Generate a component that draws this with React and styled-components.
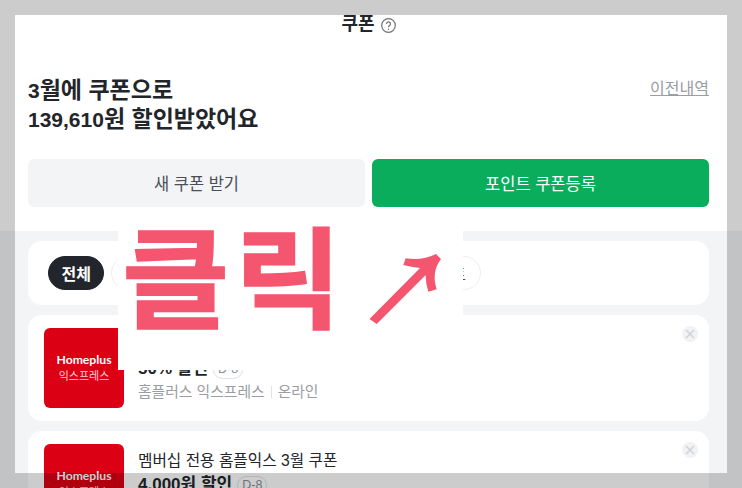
import styled, { createGlobalStyle } from "styled-components";

const GlobalStyle = createGlobalStyle`
  html, body {
    margin: 0;
    padding: 0;
    background: #fff;
  }
  * {
    box-sizing: border-box;
  }
`;

const Page = styled.div`
  position: relative;
  width: 742px;
  height: 488px;
  overflow: hidden;
  font-family: "Liberation Sans", "Noto Sans CJK KR", sans-serif;
  color: #22252a;
  background: #f3f4f6;
`;

const Top = styled.section`
  height: 231px;
  padding: 14px 33px 0 28px;
  background: #fff;
`;

const TitleBar = styled.div`
  display: flex;
  justify-content: center;
  align-items: center;
  gap: 6px;
  height: 20px;

  svg {
    margin-top: 3px;
  }
`;

const Title = styled.h1`
  margin: 0;
  font-size: 18px;
  line-height: 20px;
  font-weight: 700;
`;

const Summary = styled.div`
  display: flex;
  justify-content: space-between;
  align-items: flex-start;
  margin-top: 42px;
`;

const Headline = styled.h2`
  margin: 0;
  font-size: 23px;
  line-height: 29px;
  font-weight: 700;
`;

const Digits = styled.span`
  font-size: 21px;
`;

const HistoryLink = styled.a`
  font-size: 16px;
  line-height: 20px;
  margin-top: 3px;
  color: #9a9da3;
  text-decoration: underline;
`;

const ButtonRow = styled.div`
  display: grid;
  grid-template-columns: 1fr 1fr;
  gap: 7px;
  margin-top: 25px;
`;

const ActionButton = styled.button`
  height: 48px;
  border: none;
  border-radius: 6px;
  font-family: inherit;
  font-size: 16.5px;
  background: ${(p) => (p.$primary ? "#0aad5c" : "#f3f4f6")};
  color: ${(p) => (p.$primary ? "#fff" : "#4a4f57")};
`;

const ListArea = styled.section`
  display: flex;
  flex-direction: column;
  gap: 10px;
  padding: 10px 33px 0 28px;
`;

const FilterCard = styled.div`
  display: flex;
  align-items: center;
  gap: 6.7px;
  height: 64px;
  padding: 0 20px;
  border-radius: 14px;
  background: #fff;
`;

const Chip = styled.span`
  display: flex;
  justify-content: center;
  align-items: center;
  height: 34px;
  padding: 0 ${(p) => (p.$active ? "12.5px" : "14px")};
  border-radius: 17px;
  font-size: 16px;
  white-space: nowrap;
  font-weight: ${(p) => (p.$active ? 700 : 400)};
  color: ${(p) => (p.$active ? "#fff" : "#4a4f57")};
  background: ${(p) => (p.$active ? "#22262c" : "#fff")};
  border: 1px solid ${(p) => (p.$active ? "#22262c" : "#eceef0")};
`;

const CouponCard = styled.article`
  position: relative;
  display: flex;
  align-items: center;
  flex-shrink: 0;
  gap: 14px;
  height: 106px;
  padding: 0 16px;
  border-radius: 14px;
  background: #fff;
`;

const Thumb = styled.div`
  display: flex;
  flex-direction: column;
  justify-content: center;
  align-items: center;
  flex-shrink: 0;
  width: 80px;
  height: 80px;
  border-radius: 6px;
  color: #fff;
  background: #dc0014;
`;

const ThumbBrand = styled.span`
  font-family: Lato, "Liberation Sans", sans-serif;
  font-size: 12.2px;
  line-height: 16px;
  font-weight: 700;
`;

const ThumbSub = styled.span`
  font-size: 11px;
  line-height: 17px;
  color: rgba(255, 255, 255, 0.82);
`;

const CouponText = styled.div`
  display: flex;
  flex-direction: column;
`;

const CouponName = styled.div`
  margin-bottom: 3px;
  font-size: 15.7px;
  line-height: 21px;
`;

const AmountRow = styled.div`
  display: flex;
  align-items: center;
  gap: 5px;
  height: 22px;
`;

const Amount = styled.strong`
  font-size: 17px;
  line-height: 22px;
`;

const DayBadge = styled.span`
  padding: 0 4px;
  border: 1px solid #dfe1e4;
  border-radius: 10px;
  font-size: 12.5px;
  line-height: 17px;
  color: #8b8f96;
`;

const Meta = styled.div`
  display: flex;
  align-items: center;
  gap: 6px;
  margin-top: 2px;
  font-size: 14.8px;
  line-height: 20px;
  color: #9a9da3;
`;

const MetaDivider = styled.i`
  width: 1px;
  height: 12px;
  background: #dfe1e4;
`;

const CloseButton = styled.button`
  position: absolute;
  top: 11px;
  right: 11px;
  display: flex;
  justify-content: center;
  align-items: center;
  width: 16px;
  height: 16px;
  padding: 0;
  border: none;
  border-radius: 50%;
  background: #f1f2f4;
`;

const Annotation = styled.div`
  position: absolute;
  left: 118px;
  top: 220px;
  width: 345px;
  height: 150px;
  background: #fff;
`;

const ClickLabel = styled.span`
  position: absolute;
  left: 4px;
  top: -12px;
  font-family: "Noto Sans CJK KR", sans-serif;
  font-size: 110px;
  line-height: 128px;
  font-weight: 700;
  letter-spacing: 5px;
  color: #f4556f;
  -webkit-text-stroke: 1.5px #f4556f;
  transform: scaleX(1.06);
  transform-origin: left center;
`;

const Arrow = styled.svg`
  position: absolute;
  left: 247px;
  top: 30px;
`;

const Dim = styled.div`
  position: absolute;
  inset: 15px;
  box-shadow: 0 0 0 40px rgba(0, 0, 0, 0.2);
  pointer-events: none;
`;

const HelpIcon = () => (
  <svg width="15" height="15" viewBox="0 0 15 15" fill="none" stroke="#6f7175" strokeWidth="1.2">
    <circle cx="7.5" cy="7.5" r="6.8" />
    <path d="M5.5 6a2 2 0 1 1 3.1 1.6c-.7.5-1.1.8-1.1 1.7" />
    <circle cx="7.5" cy="11.2" r=".7" fill="#6f7175" stroke="none" />
  </svg>
);

const CloseIcon = () => (
  <svg width="10" height="10" viewBox="0 0 10 10" stroke="#cdcfd3" strokeWidth="1.2">
    <path d="M1 1l8 8M9 1l-8 8" />
  </svg>
);

const coupons = [
  {
    name: "멤버십 전용 홈플익스 3월 쿠폰",
    amount: "50% 할인",
    day: "D-8",
  },
  {
    name: "멤버십 전용 홈플익스 3월 쿠폰",
    amount: "4,000원 할인",
    day: "D-8",
  },
];

const App = () => {
  return (
    <Page>
      <GlobalStyle />
      <Top>
        <TitleBar>
          <Title>쿠폰</Title>
          <HelpIcon />
        </TitleBar>
        <Summary>
          <Headline>
            <Digits>3</Digits>월에 쿠폰으로
            <br />
            <Digits>139,610</Digits>원 할인받았어요
          </Headline>
          <HistoryLink>이전내역</HistoryLink>
        </Summary>
        <ButtonRow>
          <ActionButton>새 쿠폰 받기</ActionButton>
          <ActionButton $primary>포인트 쿠폰등록</ActionButton>
        </ButtonRow>
      </Top>
      <ListArea>
        <FilterCard>
          <Chip $active>전체</Chip>
          <Chip>온라인 쇼핑몰</Chip>
          <Chip>패션 뷰티</Chip>
          <Chip>편의점</Chip>
          <Chip>마트</Chip>
        </FilterCard>
        {coupons.map((coupon) => (
          <CouponCard key={coupon.amount}>
            <Thumb>
              <ThumbBrand>Homeplus</ThumbBrand>
              <ThumbSub>익스프레스</ThumbSub>
            </Thumb>
            <CouponText>
              <CouponName>{coupon.name}</CouponName>
              <AmountRow>
                <Amount>{coupon.amount}</Amount>
                <DayBadge>{coupon.day}</DayBadge>
              </AmountRow>
              <Meta>
                홈플러스 익스프레스
                <MetaDivider />
                온라인
              </Meta>
            </CouponText>
            <CloseButton>
              <CloseIcon />
            </CloseButton>
          </CouponCard>
        ))}
      </ListArea>
      <Annotation>
        <ClickLabel>클릭</ClickLabel>
        <Arrow width="80" height="80" viewBox="0 0 80 80" fill="#f4556f">
          <path d="M4.5 69L55 18Q46 17 38.3 15L40.7 8.3Q57 11 71 4L76 9Q66 22 71.7 39.3L63.3 41.7Q60.5 33 60.7 25L11.7 74Z" />
        </Arrow>
      </Annotation>
      <Dim />
    </Page>
  );
};

export default App;
